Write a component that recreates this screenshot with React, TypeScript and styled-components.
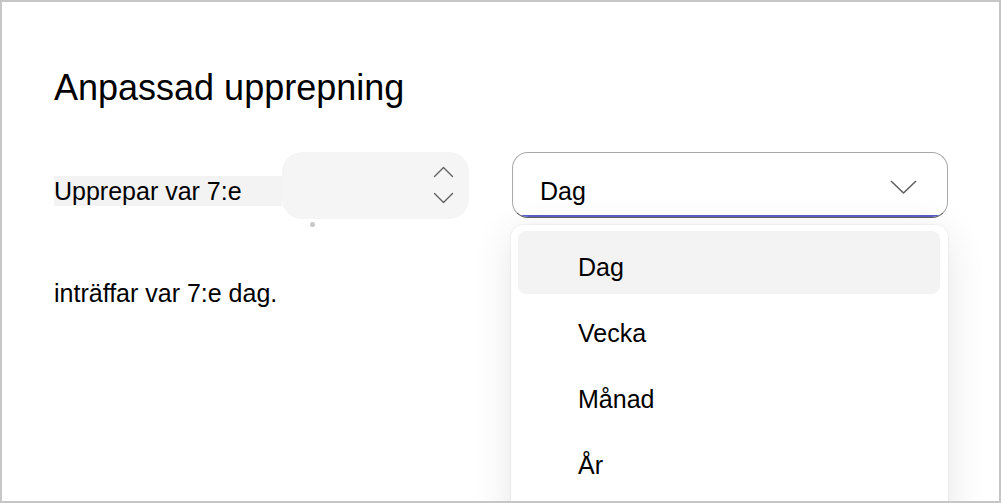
import React from 'react';
import styled, { createGlobalStyle } from 'styled-components';

const GlobalStyle = createGlobalStyle`
  html, body {
    margin: 0;
    padding: 0;
    height: 100%;
    overflow: hidden;
    background: #ffffff;
  }
  #root {
    height: 100%;
  }
  * {
    box-sizing: border-box;
  }
`;

const Frame = styled.main`
  height: 100vh;
  width: 100vw;
  border: 2px solid #c6c6c6;
  overflow: hidden;
  padding: 64px 0 0 52px;
  font-family: 'Liberation Sans', Arial, sans-serif;
  color: #000000;
`;

const Title = styled.h1`
  margin: 0;
  font-size: 36px;
  font-weight: 400;
  line-height: 44px;
`;

const Row = styled.div`
  display: flex;
  align-items: flex-start;
  margin-top: 42px;
`;

const Label = styled.span`
  width: 228px;
  margin-top: 24px;
  font-size: 25px;
  line-height: 30px;
  background: #f3f3f3;
`;

const SpinBox = styled.div`
  position: relative;
  width: 187px;
  height: 67px;
  border-radius: 20px;
  background: #f5f5f5;
  display: flex;
  justify-content: flex-end;
`;

const SpinButtons = styled.div`
  display: flex;
  flex-direction: column;
  gap: 14px;
  padding-top: 14px;
  margin-right: 15px;
`;

const FocusDot = styled.span`
  position: absolute;
  left: 28px;
  top: 70px;
  width: 5px;
  height: 5px;
  border-radius: 50%;
  background: #c8c8c8;
`;

const DropdownWrap = styled.div`
  position: relative;
  margin-left: 43px;
  width: 436px;
`;

const SelectBox = styled.div`
  position: relative;
  height: 66px;
  border: 1.5px solid #a8a8a8;
  border-bottom-color: #616161;
  border-radius: 16px;
  overflow: hidden;
  display: flex;
  justify-content: space-between;
  align-items: flex-start;
  padding: 0 30px 0 27px;

  &::after {
    content: '';
    position: absolute;
    left: 0;
    right: 0;
    bottom: 0;
    height: 2px;
    background: #5b5fc7;
  }
`;

const SelectValue = styled.span`
  margin-top: 23px;
  font-size: 25px;
  line-height: 30px;
`;

const Chevron = styled.svg`
  margin-top: 27px;
`;

const Listbox = styled.ul`
  position: absolute;
  top: 73px;
  left: -1px;
  width: 437px;
  margin: 0;
  padding: 6px 8px 40px 7px;
  list-style: none;
  background: #ffffff;
  border-radius: 12px;
  box-shadow: 0 0 2px rgba(0, 0, 0, 0.12), 0 8px 40px rgba(0, 0, 0, 0.1);
  display: flex;
  flex-direction: column;
  gap: 3px;
`;

const Option = styled.li<{ $active?: boolean }>`
  height: 63px;
  padding: 21px 0 0 60px;
  border-radius: 8px;
  font-size: 25px;
  line-height: 30px;
  background: ${(p) => (p.$active ? '#f3f3f3' : 'transparent')};
`;

const Summary = styled.p`
  margin: 59px 0 0 0;
  font-size: 25px;
  line-height: 30px;
`;

const SmallChevron = ({ up }: { up?: boolean }) => (
  <svg width="21" height="12" viewBox="0 0 21 12" fill="none">
    <path
      d={up ? 'M1.5 10.5 L10.5 1.5 L19.5 10.5' : 'M1.5 1.5 L10.5 10.5 L19.5 1.5'}
      stroke="#616161"
      strokeWidth="1.4"
      strokeLinecap="round"
      strokeLinejoin="round"
    />
  </svg>
);

const options = ['Dag', 'Vecka', 'Månad', 'År'];

const App = () => {
  return (
    <>
      <GlobalStyle />
      <Frame>
        <Title>Anpassad upprepning</Title>
        <Row>
          <Label>Upprepar var 7:e</Label>
          <SpinBox>
            <SpinButtons>
              <SmallChevron up />
              <SmallChevron />
            </SpinButtons>
            <FocusDot />
          </SpinBox>
          <DropdownWrap>
            <SelectBox>
              <SelectValue>Dag</SelectValue>
              <Chevron width="27" height="14" viewBox="0 0 27 14" fill="none">
                <path
                  d="M1.5 1.5 L13.5 13 L25.5 1.5"
                  stroke="#616161"
                  strokeWidth="1.6"
                  strokeLinecap="round"
                  strokeLinejoin="round"
                />
              </Chevron>
            </SelectBox>
            <Listbox>
              {options.map((o, i) => (
                <Option key={o} $active={i === 0}>
                  {o}
                </Option>
              ))}
            </Listbox>
          </DropdownWrap>
        </Row>
        <Summary>inträffar var 7:e dag.</Summary>
      </Frame>
    </>
  );
};

export default App;
